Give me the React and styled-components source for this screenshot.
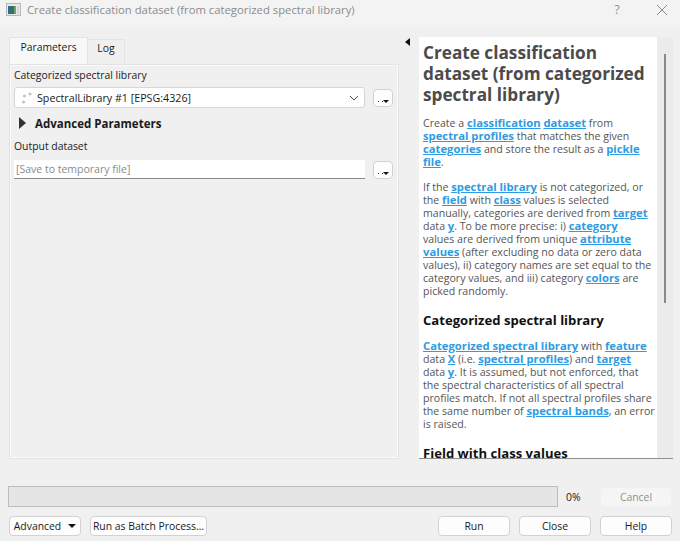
import styled, { createGlobalStyle } from 'styled-components'

const Global = createGlobalStyle`
  html, body { margin: 0; padding: 0; background: #f0f0f0; }
  * { box-sizing: border-box; }
`

const Window = styled.div`
  width: 680px;
  height: 541px;
  display: flex;
  flex-direction: column;
  overflow: hidden;
  background: #f0f0f0;
  color: #1a1a1a;
  font-family: "Open Sans", "Liberation Sans", sans-serif;
  font-size: 10.4px;
`

const TitleBar = styled.div`
  height: 25px;
  flex: none;
  display: flex;
  align-items: center;
  padding: 0 10px 6px 6px;
  background: #f3f3f3;
  color: #8c8c8c;
  font-size: 11.3px;
`

const TitleText = styled.span`
  margin-left: 6px;
  flex: 1;
`

const TitleBtn = styled.span`
  display: flex;
  justify-content: center;
  width: 16px;
  margin-left: ${(props) => props.$gap}px;
  color: #8c8c8c;
  font-size: 12px;
`

const Main = styled.div`
  height: 434px;
  flex: none;
  display: flex;
  padding: 12px 7px 0 9px;
`

const LeftPane = styled.div`
  width: 391px;
  display: flex;
  flex-direction: column;
`

const Tabs = styled.div`
  height: 27px;
  flex: none;
  display: flex;
  align-items: flex-end;
`

const Tab = styled.div`
  height: ${(props) => (props.$active ? 27 : 25)}px;
  width: ${(props) => props.$width}px;
  display: flex;
  align-items: center;
  justify-content: center;
  background: ${(props) => (props.$active ? '#f8f8f8' : '#f0f0f0')};
  border: 1px solid #e4e4e4;
  border-bottom: none;
  border-left-width: ${(props) => (props.$active ? 1 : 0)}px;
  padding-bottom: 9px;
`

const Panel = styled.div`
  flex: 1;
  padding: 3px 4px;
  border: 1px solid #e3e3e3;
  box-shadow: inset 0 0 0 1px #fafafa;
  display: flex;
  flex-direction: column;
`

const Label = styled.div`
  height: 15px;
  line-height: 15px;
  margin-bottom: ${(props) => props.$mb}px;
`

const FieldRow = styled.div`
  display: flex;
  align-items: center;
  gap: 8px;
`

const Combo = styled.div`
  width: 351px;
  height: 21px;
  display: flex;
  align-items: center;
  padding: 0 5px 0 6px;
  background: #fff;
  border: 1px solid #d6d6d6;
  border-radius: 3px;
  font-size: 10.7px;
`

const ComboText = styled.span`
  flex: 1;
  margin-left: 4px;
`

const TextInput = styled.div`
  width: 351px;
  height: 19px;
  line-height: 18px;
  padding-left: 2px;
  background: #fff;
  border-bottom: 1px solid #8a8a8a;
  color: #8a8a8a;
  font-size: 10.5px;
`

const DotsButton = styled.div`
  width: 20px;
  height: 18px;
  background: #fdfdfd;
  border: 1px solid #d2d2d2;
  border-radius: 4px;
  position: relative;
`

const Dots = styled.span`
  position: absolute;
  left: 4px;
  bottom: 4px;
  width: 5px;
  height: 1px;
  border-left: 1px solid #222;
  border-right: 1px solid #222;
`

const DotsArrow = styled.span`
  position: absolute;
  right: 3px;
  bottom: 3px;
  border: 3px solid transparent;
  border-top-color: #111;
  border-bottom: none;
`

const Advanced = styled.div`
  height: 20px;
  display: flex;
  align-items: center;
  margin: 5px 0 6px;
  padding-left: 5px;
  font-weight: 700;
  font-size: 11.5px;
`

const Triangle = styled.span`
  width: 0;
  height: 0;
  margin-right: 9px;
  border-left: 7px solid #333;
  border-top: 6px solid transparent;
  border-bottom: 6px solid transparent;
`

const Splitter = styled.div`
  width: 20px;
  flex: none;
  padding: 1px 0 0 6px;
`

const CollapseArrow = styled.span`
  display: block;
  width: 0;
  height: 0;
  border-right: 5px solid #111;
  border-top: 4px solid transparent;
  border-bottom: 4px solid transparent;
`

const HelpPane = styled.div`
  width: 254px;
  flex: none;
  display: flex;
  border-bottom: 1px solid #8f8f8f;
  background: #ebebeb;
`

const HelpBody = styled.div`
  width: 238px;
  flex: none;
  overflow: hidden;
  background: #fff;
  padding: 5px 0 0 4px;
  white-space: nowrap;
  color: #555;
  font-size: 10.6px;
  line-height: 13px;
`

const HelpTitle = styled.h1`
  margin: 0 0 12px;
  font-size: 17.2px;
  line-height: 21px;
  font-weight: 700;
  color: #4b4b4b;
`

const Para = styled.p`
  margin: 0 0 12px;
`

const SubTitle = styled.h2`
  margin: 14px 0 12px;
  font-size: 13.1px;
  line-height: 16px;
  font-weight: 700;
  color: #111;
`

const Term = styled.a`
  font-weight: 700;
  font-size: 11.25px;
  line-height: 0;
  color: #2f9be3;
  text-decoration: underline;
`

const ScrollTrack = styled.div`
  flex: 1;
  padding: 17px 0 0 7px;
`

const ScrollThumb = styled.div`
  width: 2px;
  height: 249px;
  background: #8a8a8a;
`

const Bottom = styled.div`
  flex: 1;
  display: flex;
  flex-direction: column;
  padding: 27px 8px 0 8px;
`

const ProgressRow = styled.div`
  display: flex;
  align-items: center;
  height: 21px;
`

const ProgressBar = styled.div`
  width: 550px;
  height: 21px;
  background: #e5e5e5;
  border: 1px solid #bcbcbc;
`

const Percent = styled.span`
  margin-left: 8px;
  width: 34px;
`

const ButtonRow = styled.div`
  display: flex;
  margin-top: 9px;
  padding-left: 1px;
`

const Button = styled.div`
  width: ${(props) => props.$width}px;
  height: 20px;
  margin-left: ${(props) => props.$ml || 0}px;
  display: flex;
  align-items: center;
  justify-content: center;
  white-space: nowrap;
  background: ${(props) => (props.$disabled ? '#f5f5f5' : '#fdfdfd')};
  border: 1px solid ${(props) => (props.$disabled ? '#f0f0f0' : '#d2d2d2')};
  border-radius: 4px;
  color: ${(props) => (props.$disabled ? '#909090' : '#1a1a1a')};
`

const MenuArrow = styled.span`
  margin-left: 7px;
  border: 4px solid transparent;
  border-top-color: #111;
  border-bottom: none;
`

function DotsBtn() {
  return (
    <DotsButton>
      <Dots />
      <DotsArrow />
    </DotsButton>
  )
}

export default function App() {
  return (
    <Window>
      <Global />
      <TitleBar>
        <svg width="15" height="13" viewBox="0 0 15 13">
          <rect x="0.5" y="0.5" width="14" height="12" fill="#e8e8e8" stroke="#b8b8b8" />
          <rect x="2" y="3" width="6" height="8" fill="#2f6f80" />
          <rect x="8" y="3" width="2" height="8" fill="#7ba05b" />
          <rect x="11" y="3" width="2" height="8" fill="#cfd8de" />
        </svg>
        <TitleText>Create classification dataset (from categorized spectral library)</TitleText>
        <TitleBtn>?</TitleBtn>
        <TitleBtn $gap={29}>
          <svg width="12" height="12" viewBox="0 0 12 12">
            <path d="M1 1 L11 11 M11 1 L1 11" stroke="#8c8c8c" strokeWidth="1" fill="none" />
          </svg>
        </TitleBtn>
      </TitleBar>
      <Main>
        <LeftPane>
          <Tabs>
            <Tab $active $width={79}>Parameters</Tab>
            <Tab $width={37}>Log</Tab>
          </Tabs>
          <Panel>
            <Label $mb={4}>Categorized spectral library</Label>
            <FieldRow>
              <Combo>
                <svg width="12" height="12" viewBox="0 0 12 12">
                  <circle cx="2.5" cy="10" r="1" fill="none" stroke="#999" strokeWidth="0.8" />
                  <circle cx="3.5" cy="4" r="1" fill="none" stroke="#999" strokeWidth="0.8" />
                  <circle cx="9" cy="2" r="1" fill="none" stroke="#999" strokeWidth="0.8" />
                </svg>
                <ComboText>SpectralLibrary #1 [EPSG:4326]</ComboText>
                <svg width="10" height="6" viewBox="0 0 10 6">
                  <path d="M1 1 L5 5 L9 1" stroke="#555" strokeWidth="1" fill="none" />
                </svg>
              </Combo>
              <DotsBtn />
            </FieldRow>
            <Advanced>
              <Triangle />
              Advanced Parameters
            </Advanced>
            <Label $mb={6}>Output dataset</Label>
            <FieldRow>
              <TextInput>[Save to temporary file]</TextInput>
              <DotsBtn />
            </FieldRow>
          </Panel>
        </LeftPane>
        <Splitter>
          <CollapseArrow />
        </Splitter>
        <HelpPane>
          <HelpBody>
            <HelpTitle>
              Create classification<br />
              dataset (from categorized<br />
              spectral library)
            </HelpTitle>
            <Para>
              Create a <Term>classification</Term> <Term>dataset</Term> from<br />
              <Term>spectral profiles</Term> that matches the given<br />
              <Term>categories</Term> and store the result as a <Term>pickle</Term><br />
              <Term>file</Term>.
            </Para>
            <Para>
              If the <Term>spectral library</Term> is not categorized, or<br />
              the <Term>field</Term> with <Term>class</Term> values is selected<br />
              manually, categories are derived from <Term>target</Term><br />
              data <Term>y</Term>. To be more precise: i) <Term>category</Term><br />
              values are derived from unique <Term>attribute</Term><br />
              <Term>values</Term> (after excluding no data or zero data<br />
              values), ii) category names are set equal to the<br />
              category values, and iii) category <Term>colors</Term> are<br />
              picked randomly.
            </Para>
            <SubTitle>Categorized spectral library</SubTitle>
            <Para>
              <Term>Categorized spectral library</Term> with <Term>feature</Term><br />
              data <Term>X</Term> (i.e. <Term>spectral profiles</Term>) and <Term>target</Term><br />
              data <Term>y</Term>. It is assumed, but not enforced, that<br />
              the spectral characteristics of all spectral<br />
              profiles match. If not all spectral profiles share<br />
              the same number of <Term>spectral bands</Term>, an error<br />
              is raised.
            </Para>
            <SubTitle>Field with class values</SubTitle>
          </HelpBody>
          <ScrollTrack>
            <ScrollThumb />
          </ScrollTrack>
        </HelpPane>
      </Main>
      <Bottom>
        <ProgressRow>
          <ProgressBar />
          <Percent>0%</Percent>
          <Button $width={72} $disabled>Cancel</Button>
        </ProgressRow>
        <ButtonRow>
          <Button $width={72}>Advanced<MenuArrow /></Button>
          <Button $width={117} $ml={9}>Run as Batch Process…</Button>
          <Button $width={72} $ml={231}>Run</Button>
          <Button $width={72} $ml={9}>Close</Button>
          <Button $width={72} $ml={9}>Help</Button>
        </ButtonRow>
      </Bottom>
    </Window>
  )
}
